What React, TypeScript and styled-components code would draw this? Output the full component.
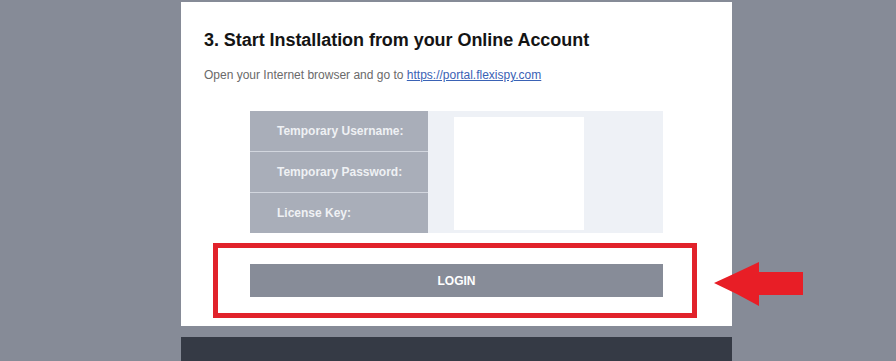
import React from "react";
import styled, { createGlobalStyle } from "styled-components";

const GlobalStyle = createGlobalStyle`
  html, body {
    margin: 0;
    padding: 0;
    background: #868b97;
    font-family: "Liberation Sans", Arial, sans-serif;
    overflow: hidden;
  }
`;

const Page = styled.div`
  width: 551px;
  margin-left: 181px;
  padding-top: 2px;
`;

const Card = styled.div`
  background: #ffffff;
  display: flex;
  flex-direction: column;
  padding: 28px 0 8px 0;
`;

const Heading = styled.h2`
  margin: 0 0 0 23px;
  font-size: 18px;
  line-height: 21px;
  font-weight: bold;
  color: #141414;
  letter-spacing: -0.05px;
`;

const Intro = styled.p`
  margin: 17px 0 0 23px;
  font-size: 12px;
  line-height: 14px;
  color: #6a6a6a;
  a {
    color: #3a62b5;
    text-decoration: underline;
  }
`;

const Credentials = styled.div`
  display: flex;
  width: 413px;
  height: 122px;
  margin: 29px 0 0 69px;
`;

const Labels = styled.div`
  display: flex;
  flex-direction: column;
  width: 178px;
  background: #d2d6de;
  gap: 1px;
`;

const Label = styled.div`
  flex: 1;
  display: flex;
  align-items: center;
  padding-left: 27px;
  background: #a9aeb9;
  color: #eff1f4;
  font-size: 12px;
  font-weight: bold;
`;

const Values = styled.div`
  flex: 1;
  background: #eef1f6;
  padding: 6px 0 3px 26px;
  display: flex;
`;

const ValueBox = styled.div`
  width: 130px;
  background: #ffffff;
`;

const Highlight = styled.div`
  position: relative;
  width: 484px;
  box-sizing: border-box;
  margin: 10px 0 0 32px;
  border: 5px solid #e1222b;
  padding: 16px 29px 16px 32px;
`;

const LoginButton = styled.button`
  display: block;
  width: 100%;
  height: 33px;
  border: none;
  background: #878c98;
  color: #ffffff;
  font-family: "Liberation Sans", Arial, sans-serif;
  font-size: 12px;
  font-weight: bold;
  cursor: pointer;
`;

const Arrow = styled.svg`
  position: absolute;
  left: calc(100% + 22px);
  top: 13px;
`;

const FooterBar = styled.div`
  margin-top: 11px;
  height: 40px;
  background: #353a45;
`;

const labels = ["Temporary Username:", "Temporary Password:", "License Key:"];

const App = () => {
  return (
    <Page>
      <GlobalStyle />
      <Card>
        <Heading>3. Start Installation from your Online Account</Heading>
        <Intro>
          Open your Internet browser and go to{" "}
          <a href="#">https://portal.flexispy.com</a>
        </Intro>
        <Credentials>
          <Labels>
            {labels.map((l) => (
              <Label key={l}>{l}</Label>
            ))}
          </Labels>
          <Values>
            <ValueBox />
          </Values>
        </Credentials>
        <Highlight>
          <LoginButton>LOGIN</LoginButton>
          <Arrow width="90" height="47" viewBox="0 0 90 47">
            <path
              d="M0 22 Q 22 12 45 1 L 45 11 L 89 11 L 89 34 L 45 34 L 45 45 Q 22 32 0 22 Z"
              fill="#e81e26"
            />
          </Arrow>
        </Highlight>
      </Card>
      <FooterBar />
    </Page>
  );
};

export default App;
